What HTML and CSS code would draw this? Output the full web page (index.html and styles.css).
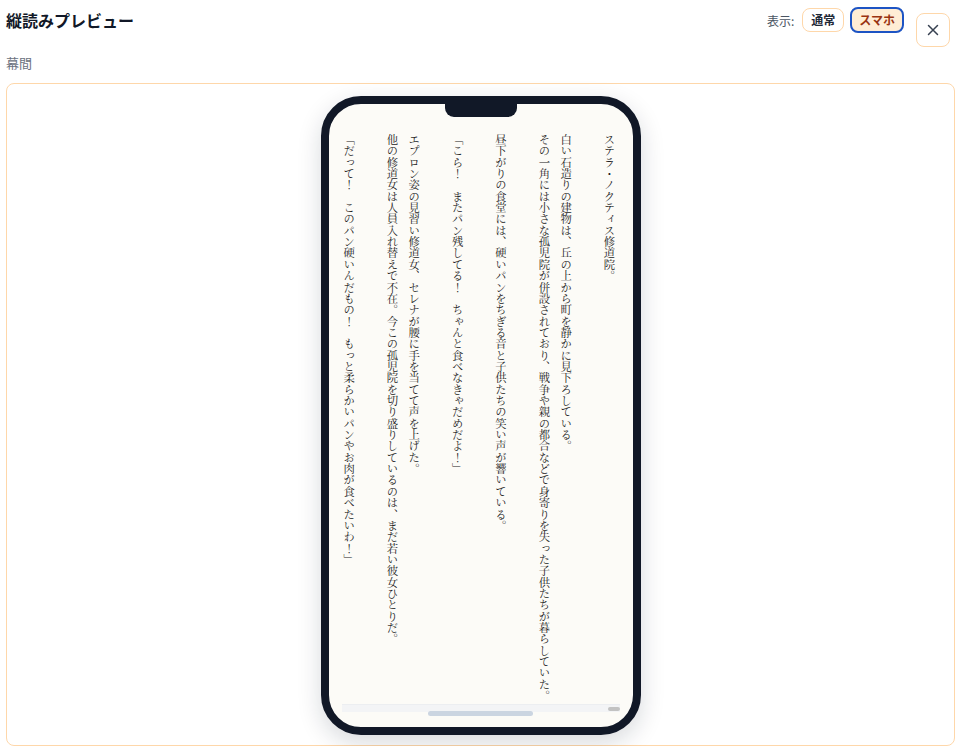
FILE: index.html
```html
<!DOCTYPE html>
<html lang="ja">
<head>
    <meta charset="UTF-8">
    <meta name="viewport" content="width=device-width, initial-scale=1.0">
    <title>縦読みプレビュー</title>
    <link rel="stylesheet" href="styles.css">
</head>
<body>

    <div class="page">
        <header class="top">
            <h1>縦読みプレビュー</h1>
            <div class="controls">
                <div class="mode">
                    <span class="mode-label">表示:</span>
                    <button class="toggle">通常</button>
                    <button class="toggle active">スマホ</button>
                </div>
                <button class="close" aria-label="閉じる">
                    <svg width="12" height="12" viewBox="0 0 12 12">
                        <path d="M1.5 1.5 L10.5 10.5 M10.5 1.5 L1.5 10.5" stroke="#374151" stroke-width="1.5" stroke-linecap="round"/>
                    </svg>
                </button>
            </div>
        </header>

        <div class="chapter">幕間</div>

        <div class="stage">
            <div class="phone">
                <div class="notch"></div>
                <div class="screen">
                    <div class="reader">
                        <p>ステラ・ノクティス修道院。</p>
                        <p>白い石造りの建物は、丘の上から町を静かに見下ろしている。<br>その一角には小さな孤児院が併設されており、戦争や親の都合などで身寄りを失った子供たちが暮らしていた。</p>
                        <p>昼下がりの食堂には、硬いパンをちぎる音と子供たちの笑い声が響いている。</p>
                        <p>「こら！　またパン残してる！　ちゃんと食べなきゃだめだよ！」</p>
                        <p>エプロン姿の見習い修道女、セレナが腰に手を当てて声を上げた。<br>他の修道女は人員入れ替えで不在。今この孤児院を切り盛りしているのは、まだ若い彼女ひとりだ。</p>
                        <p>「だって！　このパン硬いんだもの！　もっと柔らかいパンやお肉が食べたいわ！」</p>
                    </div>
                    <div class="scrollbar"><span class="thumb"></span></div>
                </div>
                <div class="home-bar"></div>
            </div>
        </div>
    </div>

</body>
</html>
```

FILE: styles.css
```css
body {
    margin: 0;
    padding: 0;
    background: #fff;
    font-family: "Noto Sans CJK JP", "Noto Sans", sans-serif;
    color: #111827;
}
.page {
    padding: 0 10px 0 6px;
}
.top {
    display: flex;
    justify-content: space-between;
    align-items: flex-start;
    height: 50px;
}
.top h1 {
    margin: 9px 0 0;
    font-size: 16px;
    line-height: 22px;
    font-weight: 700;
    color: #111827;
}
.controls {
    display: flex;
    align-items: flex-start;
    gap: 12px;
    padding-top: 7px;
    padding-right: 5px;
}
.mode {
    display: flex;
    align-items: center;
    gap: 6px;
}
.mode-label {
    font-size: 12px;
    color: #4b5563;
    margin-right: 2px;
}
.toggle {
    font-family: inherit;
    font-size: 12px;
    font-weight: 700;
    line-height: 16px;
    height: 24px;
    padding: 0 8px;
    border: 1px solid #fed7aa;
    border-radius: 8px;
    background: #fff;
    color: #1f2937;
    cursor: pointer;
}
.toggle.active {
    height: 26px;
    padding: 0 7px;
    border: 2px solid #1d54c4;
    background: #ffedd5;
    color: #9a3412;
}
.close {
    margin-top: 6px;
    width: 34px;
    height: 34px;
    display: flex;
    align-items: center;
    justify-content: center;
    border: 1px solid #fed7aa;
    border-radius: 8px;
    background: #fff;
    cursor: pointer;
    padding: 0;
}
.chapter {
    font-size: 13px;
    line-height: 26px;
    color: #6b7280;
    height: 33px;
}
.stage {
    border: 1px solid #fed7aa;
    border-radius: 8px;
    padding: 12px 0 10px;
    display: flex;
    justify-content: center;
}
.phone {
    position: relative;
    width: 304px;
    height: 623px;
    border: 8px solid #111827;
    border-radius: 40px;
    background: #fcfbf7;
    box-shadow: 0 8px 24px rgba(15, 23, 42, 0.16);
    overflow: hidden;
}
.notch {
    position: absolute;
    top: 0;
    left: 116px;
    width: 72px;
    height: 13px;
    background: #111827;
    border-radius: 0 0 9px 9px;
}
.screen {
    padding: 30px 13px 0;
}
.reader {
    writing-mode: vertical-rl;
    height: 570px;
    width: 278px;
    overflow: hidden;
    font-family: "Noto Serif CJK JP", "Noto Sans CJK JP", serif;
    font-size: 11.35px;
    line-height: 21.7px;
    color: #222;
}
.reader p {
    margin: 0 0 0 21.7px;
}
.scrollbar {
    position: relative;
    height: 7px;
    background: #f3f4f6;
    border-top: 1px solid #eceef1;
}
.thumb {
    position: absolute;
    right: 0;
    top: 2px;
    width: 12px;
    height: 4px;
    border-radius: 2px;
    background: #c2c2c2;
}
.home-bar {
    position: absolute;
    left: 99px;
    bottom: 11px;
    width: 105px;
    height: 5px;
    border-radius: 3px;
    background: #cbd5e1;
}
```
